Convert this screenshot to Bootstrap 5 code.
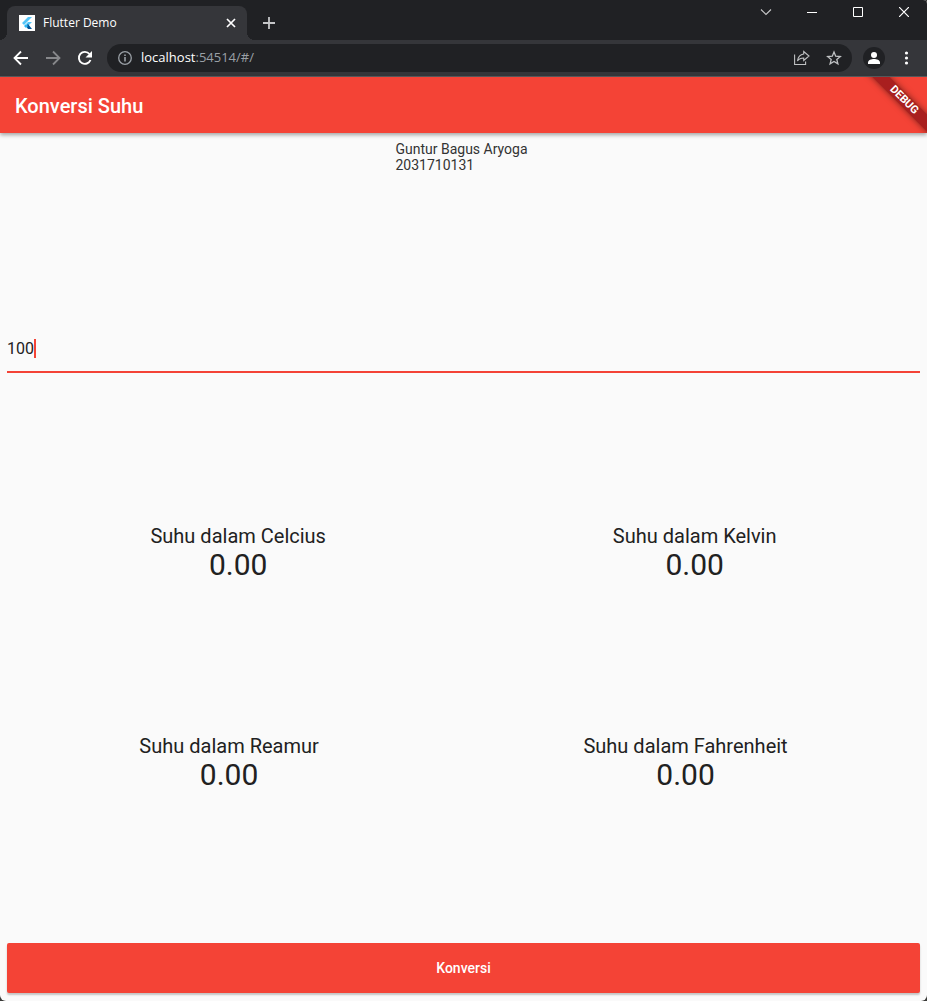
<!DOCTYPE html>
<html lang="id">
<head>
<meta charset="utf-8">
<meta name="viewport" content="width=device-width, initial-scale=1">
<title>Flutter Demo</title>
<link href="https://cdn.jsdelivr.net/npm/bootstrap@5.3.0/dist/css/bootstrap.min.css" rel="stylesheet">
<style>
  body { background: #3a3a38; font-family: Roboto, sans-serif; color: #212121; }
  .window { background: #fafafa; border-radius: 0 4px 6px 6px; overflow: hidden; }
  .chrome-ui { font-family: "Open Sans", "Noto Sans", sans-serif; color: #fff; }
  .chrome-ui button { background: none; border: 0; padding: 0; color: inherit; display: flex; align-items: center; justify-content: center; }
  .window svg { display: block; }
  .tabstrip { background: #202124; height: 40px; padding-left: 7px; }
  .tab { position: relative; width: 240px; height: 34px; background: #35363a; border-radius: 8px 8px 0 0; padding: 0 8px 0 12px; font-size: 12px; }
  .tab::before, .tab::after { content: ""; position: absolute; bottom: 0; width: 8px; height: 8px; }
  .tab::before { left: -8px; background: radial-gradient(circle at 0 0, transparent 8px, #35363a 8px); }
  .tab::after { right: -8px; background: radial-gradient(circle at 100% 0, transparent 8px, #35363a 8px); }
  .window-keys button { width: 46px; height: 24px; }
  .toolbar { background: #35363a; height: 37px; border-bottom: 1px solid #5a5b5e; padding: 0 6px 0 5px; }
  .toolbar .key { width: 32px; height: 32px; }
  .omnibox { background: #202124; height: 28px; border-radius: 14px; padding: 0 6px 0 10px; margin-left: 6px; }
  .address { font-size: 13px; color: #9aa0a6; text-decoration: none; }
  .address span { color: #fff; }
  .chrome-ui .avatar { width: 22px; height: 22px; border-radius: 50%; background: #202124; margin: 0 6px 0 11px; }
  .appbar { position: relative; z-index: 1; background: #f44336; height: 56px; padding: 2px 15px 0; box-shadow: 0 2px 4px rgba(0,0,0,.35); }
  .appbar h1 { font-size: 20px; font-weight: 500; line-height: 24px; color: #fff; }
  .ribbon-clip { position: absolute; z-index: 2; top: 0; right: 0; width: 64px; height: 56px; overflow: hidden; pointer-events: none; }
  .ribbon { position: absolute; top: 17px; right: -27px; width: 100px; height: 12px; line-height: 12px; transform: rotate(45deg); background: #a91f1f; box-shadow: 0 0 6px rgba(0,0,0,.5); color: #fff; font-size: 11px; font-weight: 700; text-align: center; }
  .content { padding: 8px 7px; }
  .author { font-size: 14px; line-height: 16px; color: #333; }
  .field { position: relative; }
  .suhu-input { background: transparent; border: 0; border-bottom: 2px solid #f44336; border-radius: 0; outline: 0; padding: 2px 0 0; height: 48px; font-size: 16px; color: #212121; caret-color: transparent; }
  .caret { position: absolute; left: 27px; top: 14px; width: 2px; height: 19px; background: #f44336; }
  .result { text-align: center; }
  .result h2 { font-size: 20px; font-weight: 400; line-height: 24px; margin: 0; }
  .result output { display: block; font-size: 30px; line-height: 34px; }
  .btn-konversi { --bs-btn-bg: #f44336; --bs-btn-color: #fff; --bs-btn-hover-bg: #e53935; --bs-btn-hover-color: #fff; height: 50px; border: 0; border-radius: 2px; font-size: 14px; font-weight: 500; box-shadow: 0 2px 2px rgba(0,0,0,.22); }
</style>
</head>
<body>
<div class="window d-flex flex-column min-vh-100">
  <header class="chrome-ui">
    <div class="tabstrip d-flex align-items-end">
      <div class="tab d-flex align-items-center">
        <svg width="16" height="16" viewBox="0 0 16 16" aria-hidden="true"><path fill="#fff" d="M0 0h16v16H0z"/><path fill="#54c5f8" d="M9 2h4L5 10 3 8zM9 7h4l-4 4-2-2z"/><path fill="#01579b" d="M7 11l2-2 4 5H9z"/><path fill="#29b6f6" d="M5 11l2-2 2 2-2 2z"/></svg>
        <span class="flex-grow-1 ps-2">Flutter Demo</span>
        <button type="button" aria-label="Tutup tab"><svg width="16" height="16" viewBox="0 0 16 16" stroke="#fff" stroke-width="1.7"><path d="M4 4l8 8M12 4l-8 8"/></svg></button>
      </div>
      <button class="ms-3 mb-2" type="button" aria-label="Tab baru"><svg width="12" height="18" viewBox="0 0 12 18" stroke="#c5c6c8" stroke-width="1.8"><path d="M6 3v12M0 9h12"/></svg></button>
      <div class="window-keys d-flex align-self-start ms-auto">
        <button type="button" aria-label="Cari tab"><svg width="12" height="12" viewBox="0 0 12 12" fill="none" stroke="#c8c9ca" stroke-width="1.1"><path d="M1 3.5l5 5 5-5"/></svg></button>
        <button type="button" aria-label="Perkecil"><svg width="10" height="10" viewBox="0 0 10 10"><path fill="#fff" d="M0 5h10v1H0z"/></svg></button>
        <button type="button" aria-label="Perbesar"><svg width="10" height="10" viewBox="0 0 10 10" fill="none" stroke="#fff"><path d="M.5.5h9v9h-9z"/></svg></button>
        <button type="button" aria-label="Tutup"><svg width="10" height="10" viewBox="0 0 10 10" stroke="#fff" stroke-width="1.2"><path d="M0 0l10 10M10 0L0 10"/></svg></button>
      </div>
    </div>
    <div class="toolbar d-flex align-items-center">
      <button class="key" type="button" aria-label="Kembali"><svg width="16" height="16" viewBox="0 0 16 16" fill="none" stroke="#fff" stroke-width="1.8"><path d="M15 8H2M8 1.5L1.5 8 8 14.5"/></svg></button>
      <button class="key" type="button" aria-label="Maju"><svg width="16" height="16" viewBox="0 0 16 16" fill="none" stroke="#87888b" stroke-width="1.8"><path d="M1 8h13M8 1.5L14.5 8 8 14.5"/></svg></button>
      <button class="key" type="button" aria-label="Muat ulang"><svg width="16" height="16" viewBox="0 0 16 16"><path fill="none" stroke="#fff" stroke-width="1.9" d="M13.5 10A6 6 0 1 1 12.5 4"/><path fill="#fff" d="M15 1v6.5H8.500z"/></svg></button>
      <div class="omnibox d-flex align-items-center flex-grow-1">
        <svg width="16" height="16" viewBox="0 0 16 16" aria-hidden="true"><circle cx="8" cy="8" r="6.3" fill="none" stroke="#9aa0a6" stroke-width="1.3"/><path fill="#9aa0a6" d="M7.200 7h1.600v4.500H7.200zM7.200 4.400h1.600V6H7.200z"/></svg>
        <a class="address ps-2 flex-grow-1" href="#/"><span>localhost</span>:54514/#/</a>
        <button class="me-3" type="button" aria-label="Bagikan"><svg width="16" height="16" viewBox="0 0 16 16" fill="none" stroke="#bfc1c3" stroke-width="1.1"><path d="M.6 4.500v10h11v-3M9.700 1.500L15 6l-5.300 4.500V8C7 8 5 8.800 3.500 11 4 7 6 4.500 9.700 4z"/></svg></button>
        <button class="me-1" type="button" aria-label="Bookmark"><svg width="16" height="16" viewBox="0 0 16 16" fill="none" stroke="#bfc1c3" stroke-width="1.3"><path d="M8 2l1.700 4.200 4.600.3-3.500 2.900 1.100 4.500L8 11.500l-3.900 2.400 1.100-4.500L1.700 6.500l4.600-.3z"/></svg></button>
      </div>
      <button class="avatar" type="button" aria-label="Profil"><svg width="14" height="14" viewBox="0 0 14 14" fill="#fff"><circle cx="7" cy="4" r="3"/><path d="M1 13v-1.500C1 9 4.500 8 7 8s6 1 6 3.500V13z"/></svg></button>
      <button type="button" aria-label="Menu"><svg width="30" height="16" viewBox="0 0 30 16" fill="#fff"><circle cx="15.500" cy="3" r="1.600"/><circle cx="15.500" cy="8" r="1.600"/><circle cx="15.500" cy="13" r="1.600"/></svg></button>
    </div>
  </header>

  <div class="appbar d-flex align-items-center">
    <h1 class="m-0">Konversi Suhu</h1>
    <div class="ribbon-clip"><div class="ribbon">DEBUG</div></div>
  </div>

  <main class="content d-flex flex-column justify-content-between align-items-center flex-grow-1">
    <div class="author pe-1">Guntur Bagus Aryoga<br>2031710131</div>
    <div class="field w-100">
      <input class="suhu-input w-100" type="text" inputmode="decimal" value="100" aria-label="Suhu">
      <span class="caret"></span>
    </div>
    <div class="d-flex justify-content-around w-100">
      <div class="result"><h2>Suhu dalam Celcius</h2><output>0.00</output></div>
      <div class="result"><h2>Suhu dalam Kelvin</h2><output>0.00</output></div>
    </div>
    <div class="d-flex justify-content-around w-100">
      <div class="result"><h2>Suhu dalam Reamur</h2><output>0.00</output></div>
      <div class="result"><h2>Suhu dalam Fahrenheit</h2><output>0.00</output></div>
    </div>
    <button class="btn btn-konversi w-100" type="button">Konversi</button>
  </main>
</div>
<script src="https://cdn.jsdelivr.net/npm/bootstrap@5.3.0/dist/js/bootstrap.bundle.min.js"></script>
</body>
</html>
